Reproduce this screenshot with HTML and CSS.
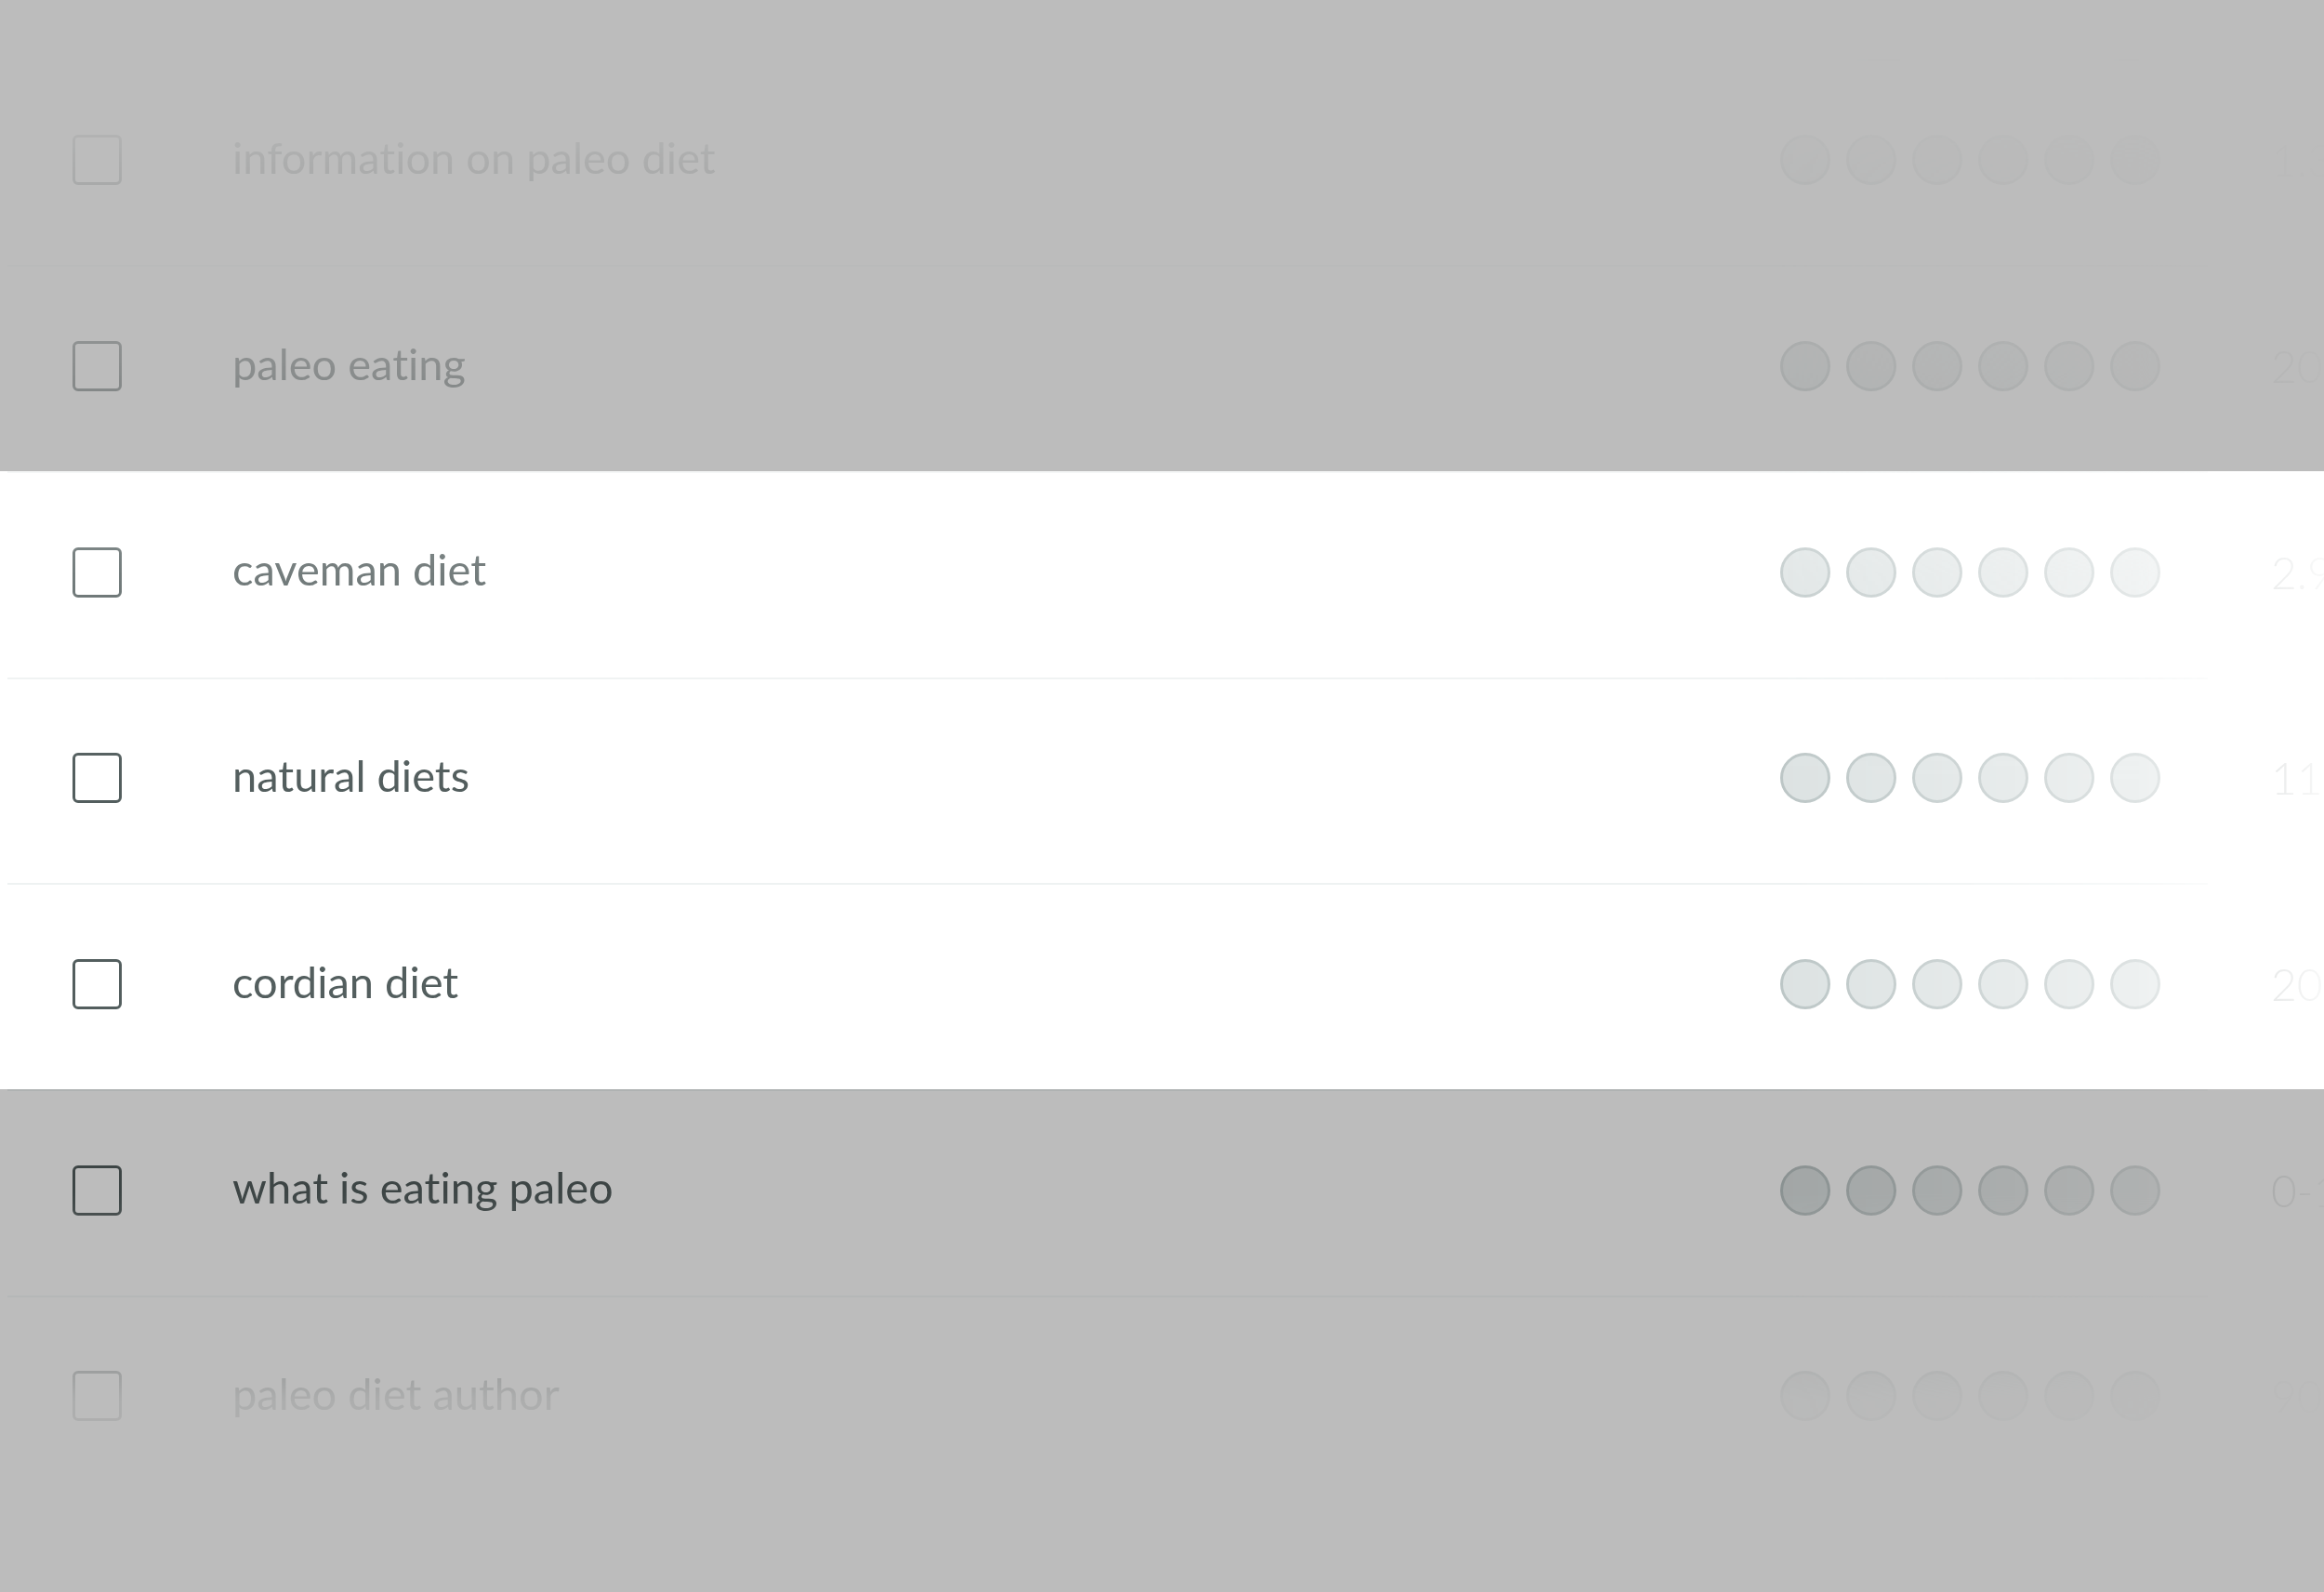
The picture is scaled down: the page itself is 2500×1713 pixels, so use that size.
FILE: index.html
```html
<!DOCTYPE html>
<html lang="en">
<head>
<meta charset="utf-8">
<title>Keyword list</title>
<link rel="stylesheet" href="styles.css">
</head>
<body>
<div class="stage">
  <div class="fade-v">
    <div class="fade-h">
      <ul class="kw-list">
        <li class="kw-row">
          <span class="cb"></span>
          <span class="kw">information on paleo diet</span>
          <span class="dots"><i></i><i></i><i></i><i></i><i></i><i></i></span>
          <span class="vol">1.3K</span>
        </li>
        <li class="kw-row">
          <span class="cb"></span>
          <span class="kw">paleo eating</span>
          <span class="dots"><i></i><i></i><i></i><i></i><i></i><i></i></span>
          <span class="vol">20K</span>
        </li>
        <li class="kw-row">
          <span class="cb"></span>
          <span class="kw">caveman diet</span>
          <span class="dots"><i></i><i></i><i></i><i></i><i></i><i></i></span>
          <span class="vol">2.9K</span>
        </li>
        <li class="kw-row">
          <span class="cb"></span>
          <span class="kw">natural diets</span>
          <span class="dots"><i></i><i></i><i></i><i></i><i></i><i></i></span>
          <span class="vol">110</span>
        </li>
        <li class="kw-row">
          <span class="cb"></span>
          <span class="kw">cordian diet</span>
          <span class="dots"><i></i><i></i><i></i><i></i><i></i><i></i></span>
          <span class="vol">20K</span>
        </li>
        <li class="kw-row">
          <span class="cb"></span>
          <span class="kw">what is eating paleo</span>
          <span class="dots"><i></i><i></i><i></i><i></i><i></i><i></i></span>
          <span class="vol">0-10</span>
        </li>
        <li class="kw-row">
          <span class="cb"></span>
          <span class="kw">paleo diet author</span>
          <span class="dots"><i></i><i></i><i></i><i></i><i></i><i></i></span>
          <span class="vol">90</span>
        </li>
      </ul>
    </div>
  </div>
  <div class="spotlight"></div>
</div>
</body>
</html>
```
FILE: styles.css
```css
html, body {
  margin: 0;
  padding: 0;
  background: #ffffff;
  overflow: hidden;
}

body {
  font-family: Lato, "Open Sans", "Liberation Sans", sans-serif;
  color: #535e5e;
}

.stage {
  position: relative;
  width: 2500px;
  height: 1713px;
  overflow: hidden;
}

.fade-v {
  height: 100%;
  -webkit-mask-image: linear-gradient(to bottom,
    rgba(0,0,0,0) 0px,
    rgba(0,0,0,.02) 110px,
    rgba(0,0,0,.12) 175px,
    rgba(0,0,0,.39) 396px,
    rgba(0,0,0,.81) 618px,
    #000 840px,
    #000 1284px,
    rgba(0,0,0,.12) 1505px,
    rgba(0,0,0,0) 1713px);
  mask-image: linear-gradient(to bottom,
    rgba(0,0,0,0) 0px,
    rgba(0,0,0,.02) 110px,
    rgba(0,0,0,.12) 175px,
    rgba(0,0,0,.39) 396px,
    rgba(0,0,0,.81) 618px,
    #000 840px,
    #000 1284px,
    rgba(0,0,0,.12) 1505px,
    rgba(0,0,0,0) 1713px);
}

.fade-h {
  height: 100%;
  -webkit-mask-image: linear-gradient(to right,
    #000 1915px,
    rgba(0,0,0,.5) 2300px,
    rgba(0,0,0,.2) 2400px,
    rgba(0,0,0,.1) 2460px,
    rgba(0,0,0,0) 2530px);
  mask-image: linear-gradient(to right,
    #000 1915px,
    rgba(0,0,0,.5) 2300px,
    rgba(0,0,0,.2) 2400px,
    rgba(0,0,0,.1) 2460px,
    rgba(0,0,0,0) 2530px);
}

.kw-list {
  list-style: none;
  margin: 0 8px;
  padding: 63.67px 0 0 0;
}

.kw-row {
  position: relative;
  height: 221.67px;
  box-sizing: border-box;
  display: flex;
  align-items: center;
  padding-left: 70px;
  padding-bottom: 4px;
}

.kw-row::before {
  content: "";
  position: absolute;
  top: 0;
  left: 0;
  right: 117px;
  height: 2px;
  background: #eef2f2;
}

.cb {
  flex: none;
  width: 53px;
  height: 54px;
  box-sizing: border-box;
  border: 3px solid #535e5e;
  border-radius: 6px;
}

.kw {
  flex: 1;
  margin-left: 119px;
  margin-bottom: 6px;
  font-size: 47px;
  line-height: 1;
  white-space: nowrap;
  font-variant-ligatures: none;
}

.dots {
  flex: none;
  display: flex;
  gap: 17px;
}

.dots i {
  display: block;
  width: 54px;
  height: 54px;
  box-sizing: border-box;
  border-radius: 50%;
  border: 3px solid #bcc6c6;
  background: #dce2e2;
}

.vol {
  flex: none;
  width: 49px;
  margin-left: 119px;
  font-size: 48px;
  font-weight: 300;
  line-height: 1;
  white-space: nowrap;
  color: #535e5e;
}

.spotlight {
  position: absolute;
  left: 0;
  right: 0;
  top: 507px;
  height: 665px;
  box-shadow: 0 0 0 3000px rgba(0, 0, 0, 0.263);
  pointer-events: none;
}
```
